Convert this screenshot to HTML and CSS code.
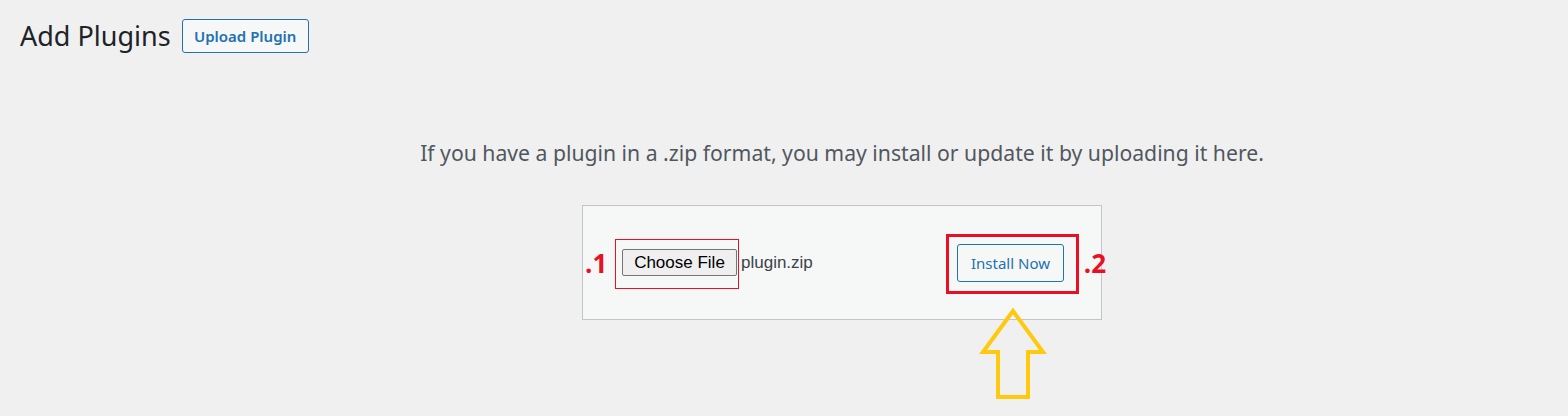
FILE: index.html
```html
<!DOCTYPE html>
<html lang="en">
<head>
<meta charset="utf-8">
<title>Add Plugins</title>
<link rel="stylesheet" href="styles.css">
</head>
<body>
<div class="wrap">
  <div class="header">
    <h1 class="title">Add Plugins</h1>
    <button class="btn upload-btn" type="button">Upload Plugin</button>
  </div>
  <div class="upload-section">
    <p class="install-help">If you have a plugin in a .zip format, you may install or update it by uploading it here.</p>
    <form class="upload-form">
      <div class="file-group">
        <span class="annot annot-1">
          <span class="annot-label label-1">.1</span>
          <span class="file-btn">Choose File</span>
        </span>
        <span class="file-name">plugin.zip</span>
      </div>
      <span class="annot annot-2">
        <span class="annot-label label-2">.2</span>
        <button class="btn install-btn" type="button">Install Now</button>
        <svg class="arrow" width="72" height="96" viewBox="0 0 72 96" aria-hidden="true">
          <polygon points="36,6 6,47 21,47 21,92 51,92 51,47 66,47" fill="none" stroke="#ffc90e" stroke-width="4" stroke-linejoin="miter"/>
        </svg>
      </span>
    </form>
  </div>
</div>
</body>
</html>
```

FILE: styles.css
```css
html, body {
  margin: 0;
  padding: 0;
}
body {
  background: #f0f0f1;
  color: #3c434a;
  font-family: "Noto Sans", "Open Sans", sans-serif;
  width: 1568px;
  height: 416px;
  overflow: hidden;
}
.wrap {
  padding: 19px 0 0 20px;
}
.header {
  display: flex;
  align-items: center;
  gap: 11px;
}
.title {
  margin: 0;
  font-size: 27px;
  font-weight: 400;
  color: #1d2327;
  line-height: 34px;
  letter-spacing: 0;
}
.btn {
  font-family: "Noto Sans", "Open Sans", sans-serif;
  background: #f6f7f7;
  color: #2271b1;
  border: 1px solid #2271b1;
  border-radius: 3px;
  cursor: pointer;
  box-sizing: border-box;
}
.upload-btn {
  height: 34px;
  width: 127px;
  padding: 0;
  font-size: 15px;
  font-weight: 600;
}
.upload-section {
  margin-left: 96px;
  width: 1452px;
  display: flex;
  flex-direction: column;
  align-items: center;
}
.install-help {
  margin: 85px 0 0;
  font-size: 21.2px;
  line-height: 30px;
  color: #50575e;
  letter-spacing: 0;
}
.upload-form {
  margin-top: 37px;
  width: 520px;
  height: 115px;
  box-sizing: border-box;
  border: 1px solid #c3c4c7;
  background: #f6f7f7;
  display: flex;
  align-items: center;
  justify-content: space-between;
  padding: 0 37px 0 39px;
}
.file-group {
  display: flex;
  align-items: center;
  gap: 4px;
}
.annot {
  position: relative;
  display: inline-flex;
}
.annot-1::before {
  content: "";
  position: absolute;
  left: -7px;
  right: -2px;
  top: -10px;
  bottom: -13px;
  border: 1px solid #e81123;
}
.annot-2::before {
  content: "";
  position: absolute;
  left: -11px;
  right: -15px;
  top: -10px;
  bottom: -12px;
  border: 3px solid #e81123;
}
.annot-label {
  position: absolute;
  top: 50%;
  transform: translateY(-50%);
  color: #e81123;
  font-family: "Open Sans", sans-serif;
  font-weight: 700;
  font-size: 26px;
  line-height: 1;
}
.label-1 {
  left: -37px;
}
.label-2 {
  right: -42px;
}
.file-btn {
  display: inline-flex;
  align-items: center;
  justify-content: center;
  width: 115px;
  height: 27px;
  box-sizing: border-box;
  border: 1px solid #767676;
  border-radius: 2px;
  background: #efefef;
  color: #000;
  font-family: "Liberation Sans", Arial, sans-serif;
  font-size: 17px;
}
.file-name {
  font-family: "Liberation Sans", Arial, sans-serif;
  font-size: 17px;
  color: #3c434a;
}
.install-btn {
  width: 107px;
  height: 38px;
  padding: 0;
  font-size: 15px;
  font-weight: 400;
}
.arrow {
  position: absolute;
  left: 20px;
  top: 61px;
}
```
